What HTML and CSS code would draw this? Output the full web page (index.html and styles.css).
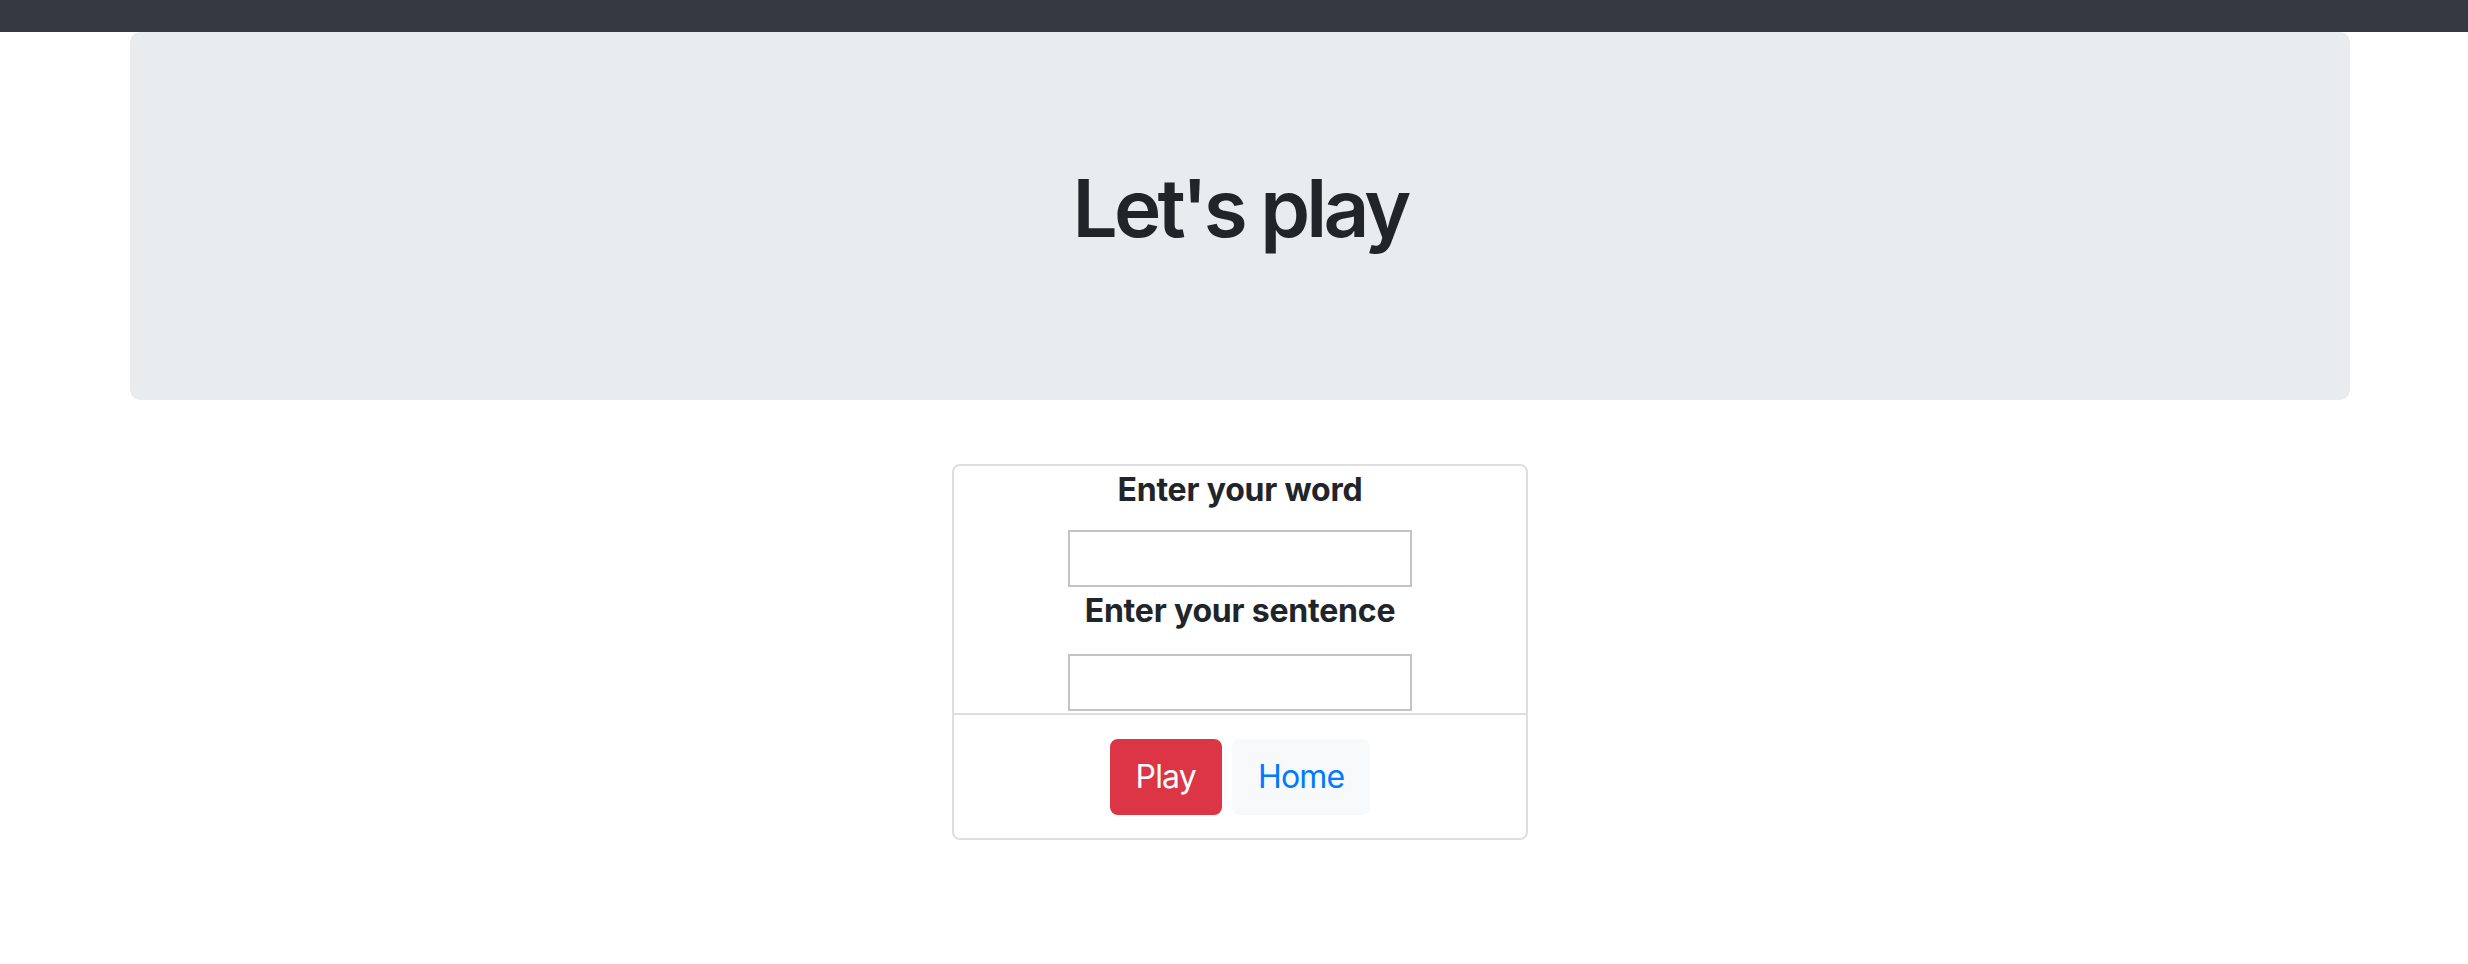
FILE: index.html
```html
<!DOCTYPE html>
<html lang="en">
<head>
<meta charset="utf-8">
<title>Let's play</title>
<link rel="stylesheet" href="styles.css">
</head>
<body>
<nav class="topbar"></nav>
<main class="container">
  <section class="jumbotron">
    <h1 class="title">Let's play</h1>
  </section>
  <div class="card">
    <form class="card-body">
      <label class="field-label" for="word">Enter your word</label>
      <input class="field-input" id="word" type="text">
      <label class="field-label field-label-2" for="sentence">Enter your sentence</label>
      <input class="field-input field-input-2" id="sentence" type="text">
    </form>
    <div class="card-footer">
      <button class="btn btn-danger" type="button">Play</button>
      <button class="btn btn-light" type="button">Home</button>
    </div>
  </div>
</main>
</body>
</html>
```

FILE: styles.css
```css
* { box-sizing: border-box; }
html, body { margin: 0; padding: 0; }
body {
  font-family: Inter, "Liberation Sans", sans-serif;
  color: #212529;
  background: #fff;
  font-size: 32px;
  line-height: 1.5;
}
.topbar {
  height: 32px;
  background: #353a42;
}
.container {
  width: 2220px;
  margin-left: 130px;
}
.jumbotron {
  background: #e9ecef;
  border-radius: 10px;
  padding: 128px 64px;
  margin-bottom: 64px;
  text-align: center;
}
.title {
  margin: 0 0 16px;
  font-size: 80px;
  font-weight: 600;
  line-height: 96px;
  letter-spacing: -3.8px;
}
.card {
  width: 576px;
  margin: 0 auto;
  border: 2px solid #dfdfdf;
  border-radius: 8px;
}
.card-body {
  display: flex;
  flex-direction: column;
  align-items: center;
  padding: 0;
  margin: 0;
}
.field-label {
  display: block;
  font-weight: 700;
  font-size: 32px;
  line-height: 48px;
  margin-bottom: 16px;
  letter-spacing: -0.2px;
}
.field-label-2 { margin-bottom: 19px; }
.field-input {
  display: block;
  width: 344px;
  height: 57px;
  border: 2px solid #c4c4c4;
  background: #fff;
  border-radius: 0;
  margin: 0;
  padding: 0 6px;
  font: inherit;
}
.field-input-2 { margin-bottom: 2px; }
.card-footer {
  border-top: 2px solid #dfdfdf;
  padding: 24px 40px 23px;
  display: flex;
  justify-content: center;
  gap: 10px;
}
.btn {
  font-family: inherit;
  font-size: 32px;
  line-height: 48px;
  font-weight: 400;
  letter-spacing: -0.8px;
  padding: 12px 24px;
  border: 2px solid transparent;
  border-radius: 8px;
  cursor: pointer;
}
.btn-danger {
  background: #dc3545;
  border-color: #dc3545;
  color: #fff;
}
.btn-light {
  background: #f8f9fa;
  border-color: #f8f9fa;
  color: #007bff;
}
```
